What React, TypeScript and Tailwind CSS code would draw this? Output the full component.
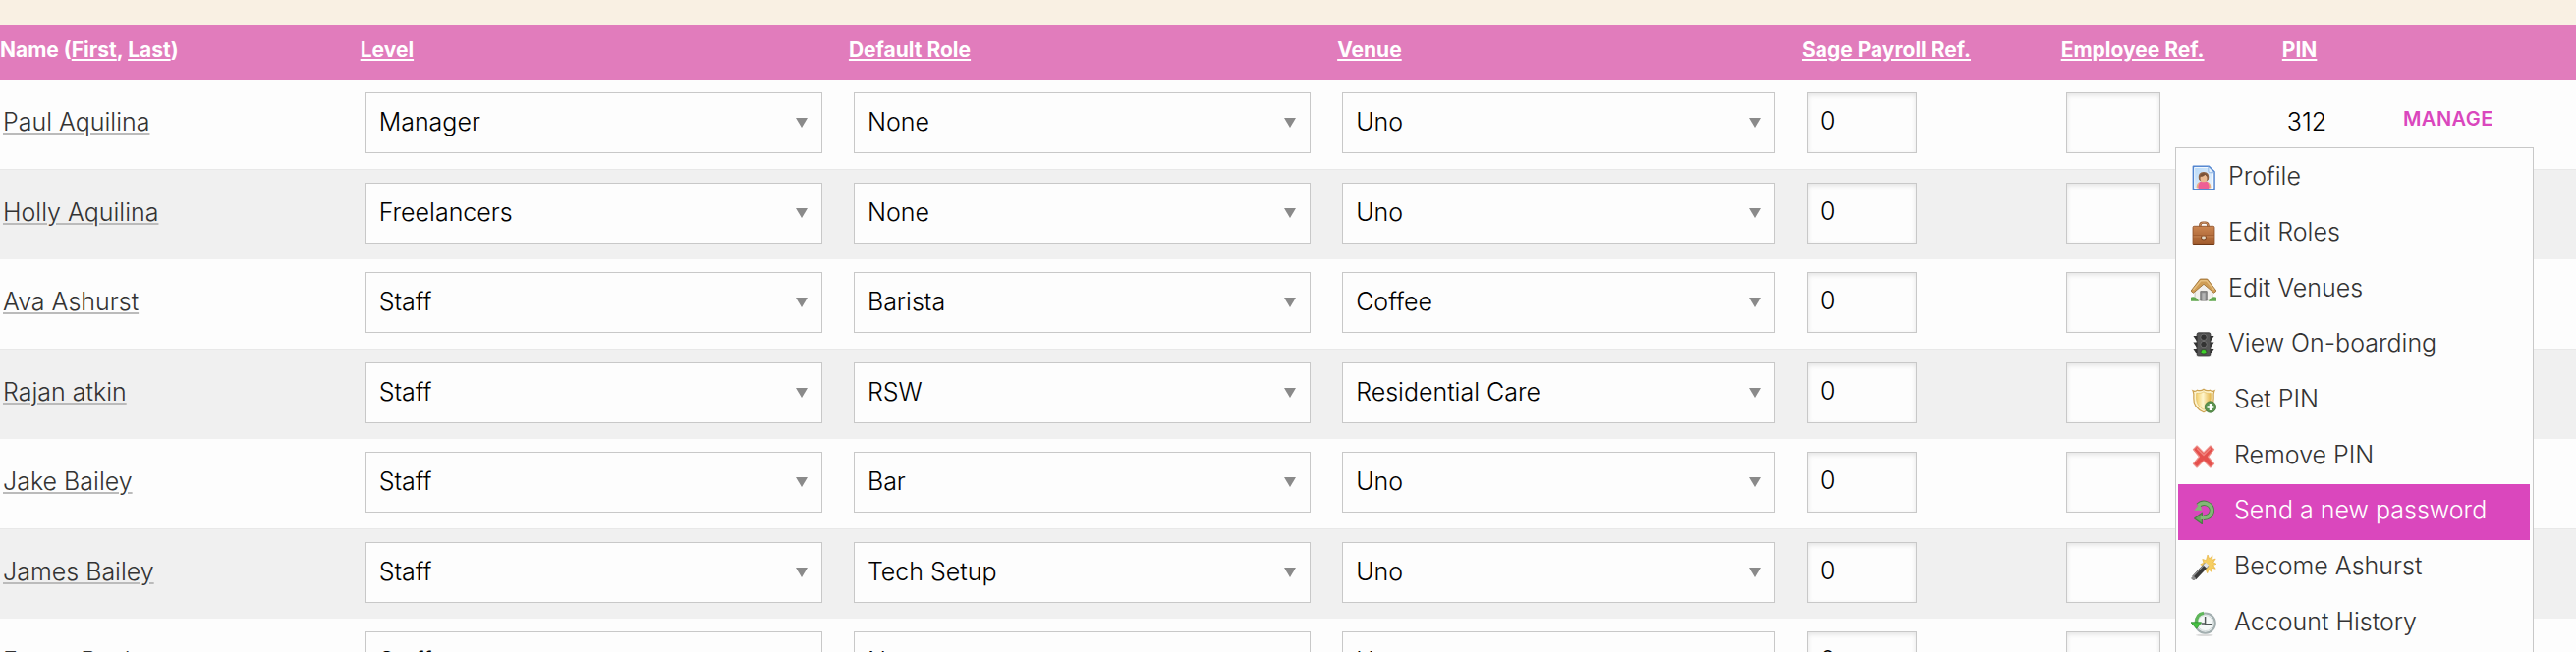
import type { ReactNode } from 'react';
import clsx from 'clsx';

interface Staff {
  name: string;
  level: string;
  role: string;
  venue: string;
  sageRef: string;
  pin?: string;
}

const LEVELS = ['Manager', 'Freelancers', 'Staff'];
const ROLES = ['None', 'Barista', 'RSW', 'Bar', 'Tech Setup'];
const VENUES = ['Uno', 'Coffee', 'Residential Care'];

const staff: Staff[] = [
  { name: 'Paul Aquilina', level: 'Manager', role: 'None', venue: 'Uno', sageRef: '0', pin: '312' },
  { name: 'Holly Aquilina', level: 'Freelancers', role: 'None', venue: 'Uno', sageRef: '0' },
  { name: 'Ava Ashurst', level: 'Staff', role: 'Barista', venue: 'Coffee', sageRef: '0' },
  { name: 'Rajan atkin', level: 'Staff', role: 'RSW', venue: 'Residential Care', sageRef: '0' },
  { name: 'Jake Bailey', level: 'Staff', role: 'Bar', venue: 'Uno', sageRef: '0' },
  { name: 'James Bailey', level: 'Staff', role: 'Tech Setup', venue: 'Uno', sageRef: '0' },
  { name: 'Emma Boyle', level: 'Staff', role: 'None', venue: 'Uno', sageRef: '0' },
];

function Icon({ children }: { children: ReactNode }) {
  return (
    <svg viewBox="0 0 32 32" className="size-[26px] shrink-0" aria-hidden="true">
      {children}
    </svg>
  );
}

const ProfileIcon = () => (
  <Icon>
    <defs>
      <linearGradient id="page" x1="0" y1="0" x2="1" y2="1">
        <stop offset="0" stopColor="#b4d6f6" />
        <stop offset="1" stopColor="#f2f9ff" />
      </linearGradient>
    </defs>
    <path d="M3 1.5h19.5l7 7v22H3z" fill="url(#page)" stroke="#4f83cf" strokeWidth="2" strokeLinejoin="round" />
    <path d="M4.5 3h17.5l6 6v20H4.5z" fill="none" stroke="#fff" strokeWidth="1" />
    <path d="M22 2l7.5 7.5H24a2 2 0 0 1-2-2z" fill="#e6f1fb" stroke="#7ea8de" strokeWidth="1" />
    <path d="M7 29c-.5-6 3-9 9-9s9.500 3 9 9z" fill="#e9b184" />
    <path d="M9.500 29.500c-1-3 .5-6 2-8.500h9c1.500 2.500 3 5.500 2 8.500z" fill="#ee5f95" />
    <path d="M10 18c-1.500-6 1-9.500 6-9.500s7.500 3.500 6 9.500l-2 2h-8z" fill="#8d6142" />
    <ellipse cx="16" cy="16.500" rx="4.200" ry="4.800" fill="#eab990" />
    <path d="M11.500 14.500c3 .2 5-.8 6.500-2.500.8 1.500 2 2.300 3 2.500-.5-3-2-4.500-5-4.500s-4.200 1.800-4.500 4.500z" fill="#7a5236" />
  </Icon>
);

const BriefcaseIcon = () => (
  <Icon>
    <defs>
      <linearGradient id="leather" x1="0" y1="0" x2="0" y2="1">
        <stop offset="0" stopColor="#cb8550" />
        <stop offset="1" stopColor="#a05a2c" />
      </linearGradient>
    </defs>
    <path d="M11.500 8V5.500A3.500 3.500 0 0 1 15 2h3a3.500 3.500 0 0 1 3.500 3.500V8" fill="none" stroke="#8f5128" strokeWidth="3" />
    <path d="M11.500 8V5.500A3.500 3.500 0 0 1 15 2h3a3.500 3.500 0 0 1 3.500 3.500V8" fill="none" stroke="#e0ab7e" strokeWidth="1" />
    <rect x="2.500" y="6.500" width="27" height="23" rx="1.500" fill="url(#leather)" stroke="#8a4b22" />
    <path d="M3 18.500h26" stroke="#8a4b22" strokeWidth="1" />
    <path d="M3 19.500h26" stroke="#cf8f5f" strokeWidth="1" />
    <path d="M12.500 19h7v2a3.500 3 0 0 1-7 0z" fill="#7d4521" />
    <ellipse cx="16" cy="21" rx="2.500" ry="1.800" fill="#e3d9c6" />
    <path d="M3 29h26" stroke="#6f3a18" strokeWidth="1.500" />
  </Icon>
);

const HouseIcon = () => (
  <Icon>
    <path d="M5 16L16 6l11 10v13.500H5z" fill="#f2f0ec" stroke="#c2beb4" strokeWidth="1" />
    <path d="M12 29.500V18h8v11.500z" fill="#8d8d8d" stroke="#6b6b6b" />
    <path d="M14 29.500V20h4v9.500z" fill="#b5b5b5" />
    <path d="M0 17.500L11.500 2.500h9L32 17.500l-3 2.500L16 9 3 20z" fill="#cf9d55" stroke="#94672b" strokeWidth="1" strokeLinejoin="round" />
    <path d="M3 16L12.500 4.500h7L29 16" fill="none" stroke="#e6c080" strokeWidth="1.800" />
    <path d="M0 30.500v-5c3-1.500 7-.5 10 5zM32 30.500v-5c-3-1.500-7-.5-10 5z" fill="#62a950" />
  </Icon>
);

const TrafficLightIcon = () => (
  <Icon>
    <ellipse cx="16" cy="30.500" rx="10" ry="1.500" fill="#d8d8d8" />
    <path d="M3 5h26l-4 6H7zM3 13h26l-4 6H7zM3 21h26l-4 6H7z" fill="#333" />
    <rect x="7.500" y="1" width="17" height="29.500" rx="2" fill="#555" stroke="#2b2b2b" strokeWidth="1" />
    <circle cx="16" cy="6.500" r="4" fill="#333" stroke="#777" strokeWidth="1" />
    <circle cx="16" cy="15.500" r="4" fill="#333" stroke="#777" strokeWidth="1" />
    <circle cx="16" cy="25" r="4" fill="#2f7d22" stroke="#444" strokeWidth="1" />
    <circle cx="16" cy="25" r="2.800" fill="#3fd02c" />
  </Icon>
);

const ShieldIcon = () => (
  <Icon>
    <defs>
      <linearGradient id="shield" x1="0" y1="0" x2="1" y2="0">
        <stop offset="0" stopColor="#f3cf6b" />
        <stop offset=".45" stopColor="#fff6cf" />
        <stop offset="1" stopColor="#e5b546" />
      </linearGradient>
    </defs>
    <path
      d="M2.500 3.500c2 1 4 .8 5.500-.8 2.500 1 5.500.8 8-1.200 2.500 2 5.500 2.200 8 1.200 1.500 1.600 3.500 1.800 5.500.8-1.500 3-1.300 6-1 9.500C29 22 24 27 16 30.500 8 27 3 22 3.500 13c.3-3.500.5-6.500-1-9.500z"
      fill="#fdf3cc"
      stroke="#cda352"
      strokeWidth="1.500"
    />
    <path d="M7 6.500c3.500.5 6.500 0 9-1.800 2.500 1.800 5.500 2.300 9 1.800C26 17 24 23 16 27.300 8 23 6 17 7 6.500z" fill="url(#shield)" stroke="#e2bc62" strokeWidth=".8" />
    <circle cx="24.500" cy="24" r="7" fill="#5c9450" stroke="#44783a" strokeWidth="1" />
    <path d="M24.500 19.800v8.400M20.300 24h8.400" stroke="#fff" strokeWidth="2.800" />
  </Icon>
);

const CrossIcon = () => (
  <Icon>
    <path
      d="M7.500 2.500L16 11l8.500-8.500 4.500 4.500-7.500 9 7.500 9-4.500 4.500L16 21l-8.500 8.500L3 25l7.500-9L3 7z"
      fill="#e5504d"
      stroke="#ee8e88"
      strokeWidth="1.500"
      strokeLinejoin="round"
    />
    <path d="M7.500 5.500L16 14l8.500-8.500" fill="none" stroke="#f0827c" strokeWidth="1.800" />
  </Icon>
);

const RefreshIcon = () => (
  <Icon>
    <path d="M9 8.500C12 5.500 16 4.500 20 6c5 2 7.300 6.500 6 11-1.300 4.500-5 6.500-10 6.700" fill="none" stroke="#4c7d45" strokeWidth="6.500" />
    <path d="M14 31.500L4.500 24.500l9.500-7z" fill="#6aa35f" stroke="#4c7d45" strokeWidth="1.500" strokeLinejoin="round" />
    <path d="M9 8.500C12 5.500 16 4.500 20 6c5 2 7.300 6.500 6 11-1.300 4.500-5 6.500-10 6.700h-4" fill="none" stroke="#82b876" strokeWidth="4.500" />
    <path d="M4 14.500h10l-3-8.500z" fill="#82b876" />
  </Icon>
);

const WandIcon = () => (
  <Icon>
    <path
      d="M21 0l2 5 4-4-.5 5.500L31 5l-3 4.500 4 2-4 1.500 3 4.500-5-1 .5 5.500-4-3.500-2 4.500-2-5-4.500 1 2-4.500-4-2.500 4-2-1.500-4.500 4.500 1.500z"
      fill="#f6ce62"
      stroke="#e6b13d"
      strokeWidth=".8"
    />
    <path d="M4 29L20 12" stroke="#3a3a3a" strokeWidth="6.500" />
    <path d="M3 27L18 11" stroke="#9a9a9a" strokeWidth="1.300" />
    <path d="M17.500 14.700L20.500 11.500" stroke="#e4e4e4" strokeWidth="5.500" />
    <path d="M1.800 31.200l3-3.200" stroke="#8c8c8c" strokeWidth="5" />
  </Icon>
);

const HistoryIcon = () => (
  <Icon>
    <ellipse cx="17" cy="30.500" rx="11" ry="1.500" fill="#dcdcdc" />
    <circle cx="18" cy="15.500" r="12.500" fill="#e9eeee" stroke="#a3afb0" strokeWidth="2.500" />
    <circle cx="18" cy="15.500" r="9.800" fill="#f5f8f8" stroke="#cfd8d8" strokeWidth="1" />
    <path d="M18 7.500V17h8.500M18 16h-5" fill="none" stroke="#4f5757" strokeWidth="1.800" />
    <path d="M16 3C9.500 4 6.500 8 7 15" fill="none" stroke="#5fb65a" strokeWidth="4" />
    <path d="M0 14.500h13L7 22.500z" fill="#46c042" stroke="#2e8f30" strokeWidth="1" strokeLinejoin="round" />
  </Icon>
);

const menuItems = [
  { label: 'Profile', icon: <ProfileIcon /> },
  { label: 'Edit Roles', icon: <BriefcaseIcon /> },
  { label: 'Edit Venues', icon: <HouseIcon /> },
  { label: 'View On-boarding', icon: <TrafficLightIcon /> },
  { label: 'Set PIN', icon: <ShieldIcon />, wide: true },
  { label: 'Remove PIN', icon: <CrossIcon />, wide: true },
  { label: 'Send a new password', icon: <RefreshIcon />, wide: true, active: true },
  { label: 'Become Ashurst', icon: <WandIcon />, wide: true },
  { label: 'Account History', icon: <HistoryIcon />, wide: true },
];

function ManageMenu() {
  return (
    <ul className="absolute top-[69px] right-[43px] z-10 grid h-[516px] w-[365px] grid-rows-9 border border-[#c8c8c8] bg-[#fdfdfd] p-0.5">
      {menuItems.map((item) => (
        <li key={item.label} className="mr-px flex">
          <button
            type="button"
            className={clsx(
              'flex w-full items-center pl-[13px] text-left',
              item.wide ? 'gap-[18px]' : 'gap-3',
              item.active ? 'bg-[#da47bd] text-white' : 'text-[#333]'
            )}
          >
            {item.icon}
            <span className="pb-1">{item.label}</span>
          </button>
        </li>
      ))}
    </ul>
  );
}

function SelectBox({ label, value, options }: { label: string; value: string; options: string[] }) {
  return (
    <div className="relative">
      <select
        aria-label={label}
        defaultValue={value}
        className="block h-[62px] w-full appearance-none border border-[#c8c8c8] bg-[#fdfdfd] pr-10 pb-0.5 pl-[13px] text-black"
      >
        {options.map((option) => (
          <option key={option}>{option}</option>
        ))}
      </select>
      <svg viewBox="0 0 12 10" className="pointer-events-none absolute top-[26px] right-[15px] h-2.5 w-3" aria-hidden="true">
        <path d="M0 0h12L6 10z" fill="#8a8a8a" />
      </svg>
    </div>
  );
}

const inputClass =
  'block h-[62px] border border-[#c8c8c8] bg-[#fdfdfd] px-[13px] pb-1 text-black shadow-[inset_0_2px_5px_rgba(0,0,0,0.1)]';

const sortLink = 'underline decoration-2 underline-offset-2';

export default function App() {
  return (
    <div className="h-screen overflow-hidden bg-[#f9f0e3] pt-[25px] font-['Inter',sans-serif] text-[25px] leading-8 font-light text-black">
      <table className="-ml-0.5 w-[calc(100%+2px)] table-fixed border-separate border-spacing-0">
        <thead>
          <tr className="h-14 bg-[#e17cbc] text-left text-[21px] text-white *:pb-1 *:font-bold">
            <th className="w-[14.05%] pl-0.5">
              Name (<a href="#first" className={sortLink}>First</a>, <a href="#last" className={sortLink}>Last</a>)
            </th>
            <th className="w-[18.95%]"><a href="#level" className={sortLink}>Level</a></th>
            <th className="w-[18.95%]"><a href="#role" className={sortLink}>Default Role</a></th>
            <th className="w-[18.02%]"><a href="#venue" className={sortLink}>Venue</a></th>
            <th className="w-[10.05%]"><a href="#sage" className={sortLink}>Sage Payroll Ref.</a></th>
            <th className="w-[8.58%]"><a href="#employee" className={sortLink}>Employee Ref.</a></th>
            <th className="w-[4.5%]"><a href="#pin" className={sortLink}>PIN</a></th>
            <th />
          </tr>
        </thead>
        <tbody>
          {staff.map((person, i) => (
            <tr
              key={person.name}
              className={clsx(
                '*:pt-[13px] *:pb-4 *:pl-[5px]',
                i % 2 ? 'bg-[#f0f0f0] *:border-t *:border-[#e8e8e8]' : 'bg-[#fdfdfd]'
              )}
            >
              <td>
                <a href="#staff" className="block pb-0.5 text-[#333] underline decoration-[#bbb] decoration-2 underline-offset-2">
                  {person.name}
                </a>
              </td>
              <td className="pr-[27px]"><SelectBox label="Level" value={person.level} options={LEVELS} /></td>
              <td className="pr-[27px]"><SelectBox label="Default Role" value={person.role} options={ROLES} /></td>
              <td className="pr-[27px]"><SelectBox label="Venue" value={person.venue} options={VENUES} /></td>
              <td><input aria-label="Sage Payroll Ref." defaultValue={person.sageRef} className={clsx(inputClass, 'w-28')} /></td>
              <td><input aria-label="Employee Ref." className={clsx(inputClass, 'w-24')} /></td>
              <td><div className="pb-0.5">{person.pin}</div></td>
              <td className="relative">
                {person.pin && (
                  <>
                    <button type="button" className="block pb-2 text-xl font-semibold tracking-wide text-[#da47bd]">
                      MANAGE
                    </button>
                    <ManageMenu />
                  </>
                )}
              </td>
            </tr>
          ))}
        </tbody>
      </table>
    </div>
  );
}
